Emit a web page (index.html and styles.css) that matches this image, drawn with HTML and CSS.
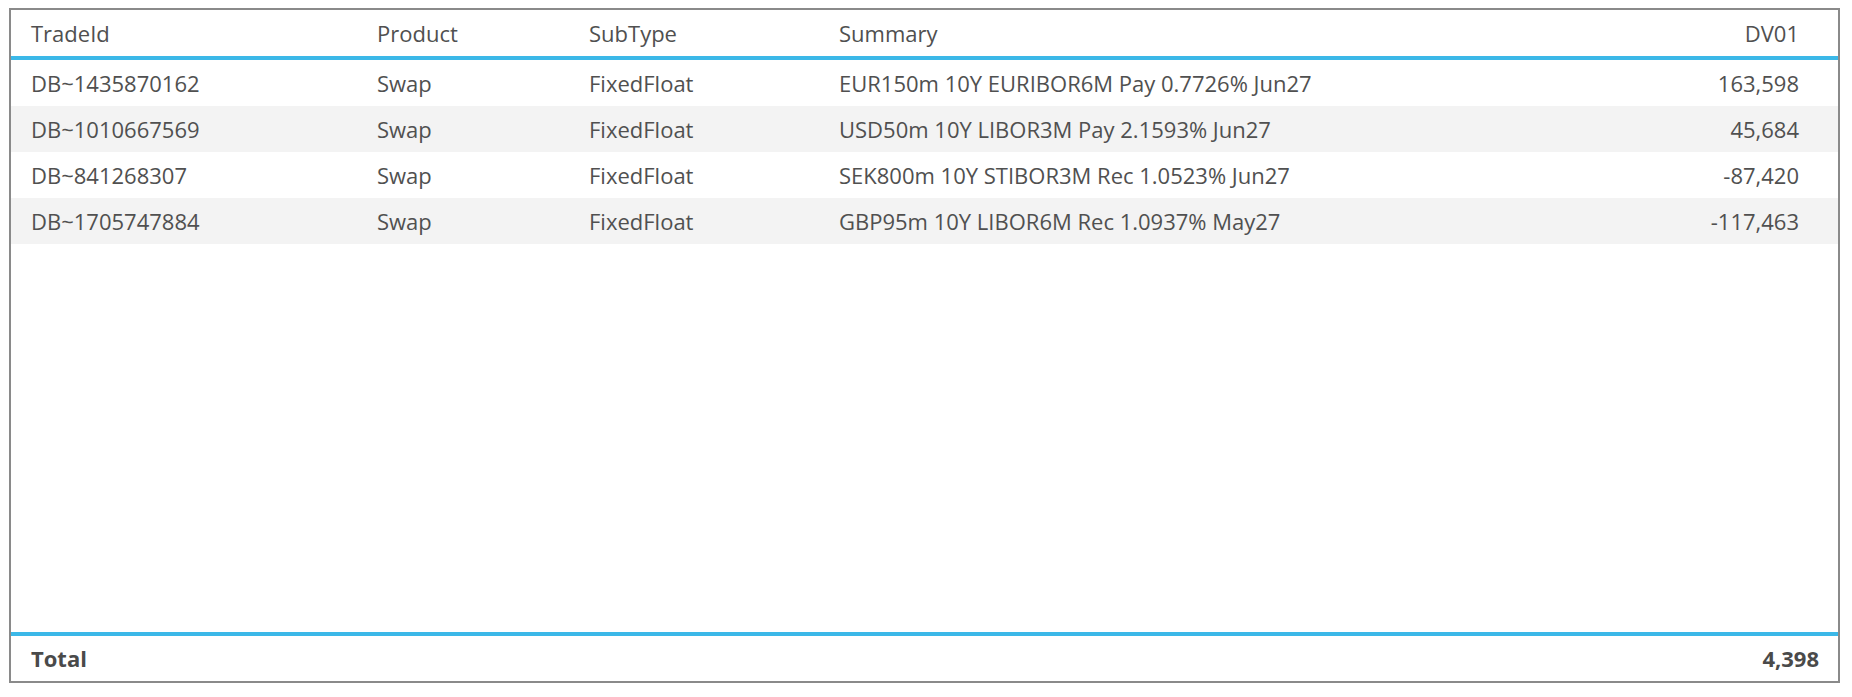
FILE: index.html
```html
<!DOCTYPE html>
<html>
<head>
<meta charset="utf-8">
<link rel="stylesheet" href="styles.css">
</head>
<body>
<div class="grid-box">
  <div class="row head">
    <div class="cell">TradeId</div>
    <div class="cell">Product</div>
    <div class="cell">SubType</div>
    <div class="cell">Summary</div>
    <div class="cell num">DV01</div>
  </div>
  <div class="body">
    <div class="row">
      <div class="cell">DB~1435870162</div>
      <div class="cell">Swap</div>
      <div class="cell">FixedFloat</div>
      <div class="cell">EUR150m 10Y EURIBOR6M Pay 0.7726% Jun27</div>
      <div class="cell num">163,598</div>
    </div>
    <div class="row alt">
      <div class="cell">DB~1010667569</div>
      <div class="cell">Swap</div>
      <div class="cell">FixedFloat</div>
      <div class="cell">USD50m 10Y LIBOR3M Pay 2.1593% Jun27</div>
      <div class="cell num">45,684</div>
    </div>
    <div class="row">
      <div class="cell">DB~841268307</div>
      <div class="cell">Swap</div>
      <div class="cell">FixedFloat</div>
      <div class="cell">SEK800m 10Y STIBOR3M Rec 1.0523% Jun27</div>
      <div class="cell num">-87,420</div>
    </div>
    <div class="row alt">
      <div class="cell">DB~1705747884</div>
      <div class="cell">Swap</div>
      <div class="cell">FixedFloat</div>
      <div class="cell">GBP95m 10Y LIBOR6M Rec 1.0937% May27</div>
      <div class="cell num">-117,463</div>
    </div>
  </div>
  <div class="foot">
    <div class="cell">Total</div>
    <div class="cell num">4,398</div>
  </div>
</div>
</body>
</html>
```

FILE: styles.css
```css
html, body {
  margin: 0;
  padding: 0;
  background: #ffffff;
}
body {
  padding: 8px 12px 0 9px;
  font-family: "Open Sans", "Liberation Sans", sans-serif;
  font-size: 22px;
  color: #505050;
}
.grid-box {
  box-sizing: border-box;
  height: 675px;
  border: 2px solid #8a8a8a;
  display: flex;
  flex-direction: column;
}
.row {
  display: grid;
  grid-template-columns: 346px 212px 250px 1fr 200px;
  align-items: center;
  height: 46px;
  padding: 0 39px 0 20px;
}
.head {
  border-bottom: 4px solid #3bb8e8;
  flex: none;
}
.body {
  flex: 1;
}
.alt {
  background: #f3f3f3;
}
.cell {
  white-space: nowrap;
  line-height: 46px;
}
.num {
  text-align: right;
}
.foot {
  flex: none;
  border-top: 4px solid #3bb8e8;
  height: 45px;
  display: flex;
  justify-content: space-between;
  align-items: center;
  padding: 0 19px 0 20px;
  font-weight: 700;
  color: #4a4a4a;
}
.foot .cell {
  line-height: 45px;
}
```
